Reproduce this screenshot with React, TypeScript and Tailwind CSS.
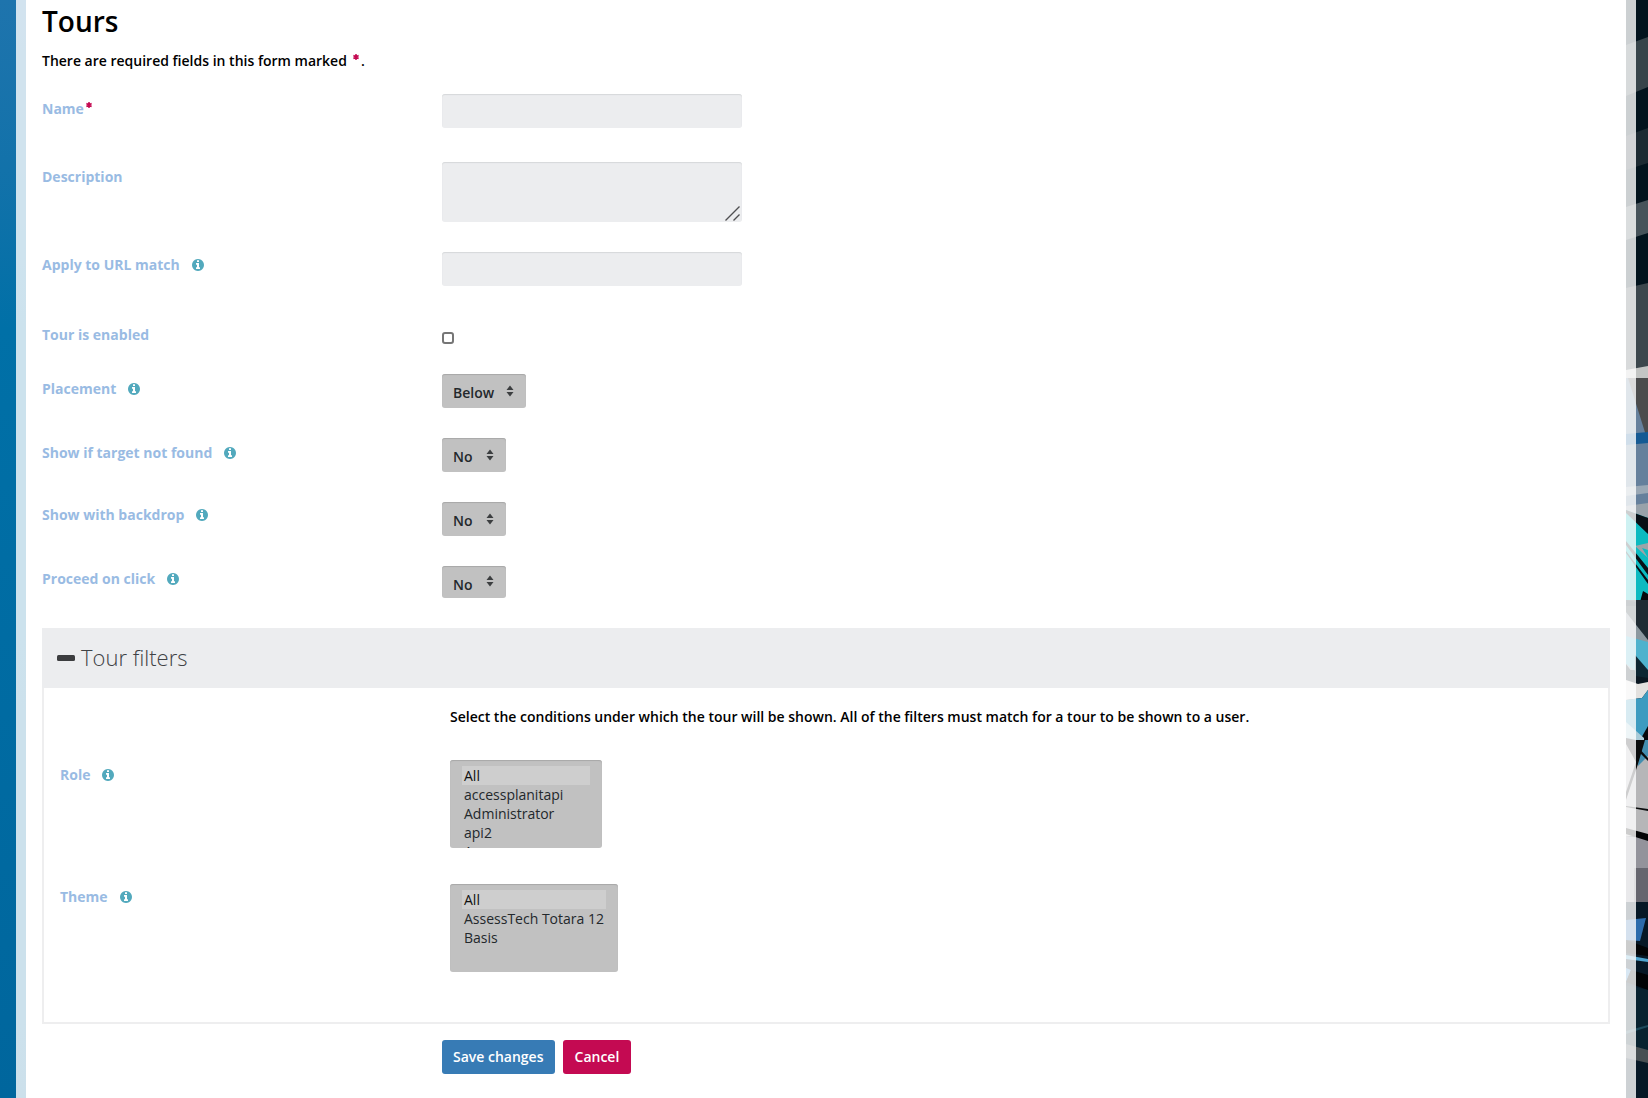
import React from "react";
import type { ReactNode } from "react";

function InfoIcon() {
  return (
    <button type="button" aria-label="Help" className="flex text-[#52a9bd]">
      <svg viewBox="0 128 1536 1536" className="size-3" fill="currentColor" aria-hidden="true">
        <path d="M1024 1376v-160q0-14-9-23t-23-9h-96v-512q0-14-9-23t-23-9h-320q-14 0-23 9t-9 23v160q0 14 9 23t23 9h96v320h-96q-14 0-23 9t-9 23v160q0 14 9 23t23 9h448q14 0 23-9t9-23zm-128-896v-160q0-14-9-23t-23-9h-192q-14 0-23 9t-9 23v160q0 14 9 23t23 9h192q14 0 23-9t9-23zm640 416q0 209-103 385.5t-279.5 279.5-385.5 103-385.5-103-279.5-279.5-103-385.5 103-385.5 279.5-279.5 385.5-103 385.5 103 279.5 279.5 103 385.5z" />
      </svg>
    </button>
  );
}

function Required() {
  return (
    <svg viewBox="0 0 12 12" className="inline-block size-1.5 shrink-0" role="img" aria-label="required">
      <path d="M6 0v12M0.8 3l10.4 6M11.2 3L0.8 9" stroke="#c40a52" strokeWidth="3" fill="none" />
    </svg>
  );
}

type RowProps = {
  id: string;
  label: string;
  help?: boolean;
  required?: boolean;
  inset?: boolean;
  raised?: boolean;
  className: string;
  children: ReactNode;
};

function Row({ id, label, help, required, inset, raised, className, children }: RowProps) {
  return (
    <div className={`flex items-start ${className}`}>
      <div
        className={`flex shrink-0 items-center leading-5 ${inset ? "w-[390px]" : "w-[400px]"} ${raised ? "pt-[3px]" : "pt-[5px]"}`}
      >
        <label htmlFor={id} className="font-bold text-[#99bbe3]">
          {label}
        </label>
        {required && (
          <span className="mb-2 ml-0.5 flex">
            <Required />
          </span>
        )}
        {help && (
          <span className="ml-3 flex">
            <InfoIcon />
          </span>
        )}
      </div>
      {children}
    </div>
  );
}

const fieldClass =
  "block w-[300px] rounded-[3px] bg-[#ecedef] px-3 text-[#23282c] shadow-[inset_0_1px_1px_#d6d8da] outline-none";

function Drop({ id, value, options, short }: { id: string; value: string; options: string[]; short?: boolean }) {
  return (
    <div className="relative">
      <select
        id={id}
        defaultValue={value}
        className={`block appearance-none rounded-[3px] bg-[#c1c1c1] pl-[11px] font-semibold text-[#23282c] shadow-[inset_0_1px_1px_#a8a8a8] outline-none ${
          short ? "h-8 pt-[5px]" : "h-[34px] pt-[3px]"
        } ${value === "No" ? "w-16" : "w-[84px]"}`}
      >
        {options.map((o) => (
          <option key={o}>{o}</option>
        ))}
      </select>
      <svg
        viewBox="0 0 8 12"
        className={`pointer-events-none absolute right-3 h-3 w-2 ${short ? "top-[9px]" : "top-[11px]"}`}
        fill="#3c3e40"
        aria-hidden="true"
      >
        <path d="M0.5 5L4 0.5 7.5 5zM0.5 7L4 11.5 7.5 7z" />
      </svg>
    </div>
  );
}

function List({ id, options, className }: { id: string; options: string[]; className: string }) {
  return (
    <select
      id={id}
      multiple
      size={4}
      defaultValue={["All"]}
      className={`block h-[88px] rounded-[3px] bg-[#c1c1c1] px-3 py-1.5 text-[#23282c] shadow-[inset_0_1px_1px_#a8a8a8] outline-none [scrollbar-width:none] ${className}`}
    >
      {options.map((o) => (
        <option key={o} className="px-0.5 py-0">
          {o}
        </option>
      ))}
    </select>
  );
}

function Backdrop() {
  return (
    <svg
      viewBox="0 0 22 1098"
      preserveAspectRatio="none"
      className="absolute right-0 top-0 h-full w-[22px]"
      aria-hidden="true"
    >
      <rect width="22" height="1098" fill="#02131d" />
      <path d="M0 45L22 37V87L0 96z" fill="#37444a" />
      <path d="M0 136L22 128V163L0 170z" fill="#1c2a32" />
      <path d="M0 207L22 200V233L0 240z" fill="#46535a" />
      <path d="M0 288L22 283V370H0z" fill="#3c474d" />
      <path d="M0 370L22 366V378H0z" fill="#c3c5c4" />
      <path d="M0 378H22V512H0z" fill="#65809c" />
      <path d="M2 378H22V442z" fill="#4b4c4d" />
      <path d="M0 434L22 432V443L0 445z" fill="#155a94" />
      <path d="M0 487L22 485V493L0 496z" fill="#9aa8b5" />
      <path d="M0 506L22 503V518L0 512z" fill="#98a2aa" />
      <path d="M0 510V600H22V518z" fill="#0cbac0" />
      <path d="M0 510L22 518V534L0 513z" fill="#081016" />
      <path d="M0 541L22 568V575L0 545zM0 551L22 580V584L0 553z" fill="#081016" />
      <path d="M9 546L22 543V550L16 548 22 558z" fill="#9ca4a8" />
      <path d="M17 591L22 594V602H14z" fill="#05090c" />
      <path d="M0 600H22V640L0 612z" fill="#1f2b33" />
      <path d="M0 600L10 602V606H0z" fill="#03121c" />
      <path d="M0 612L22 640V670H0z" fill="#8c989f" />
      <path d="M0 636L22 642V680L0 664z" fill="#4fb2cd" />
      <path d="M9 655L22 670V684H9z" fill="#0d2632" />
      <path d="M0 664L9 676 22 678V686H0z" fill="#0b1822" />
      <path d="M0 680L12 684 22 682V690L16 698 0 700z" fill="#e3e1df" />
      <path d="M0 700L16 698 22 690V740H0z" fill="#3d9bc0" />
      <path d="M22 726V740H14z" fill="#05090c" />
      <path d="M0 722L18 738V742H0z" fill="#a9cbd8" />
      <path d="M0 740H22V836H0z" fill="#b6b6b8" />
      <path d="M14 740H22V756L12 766z" fill="#438eb0" />
      <path d="M10 740H19L12 764 0 800V792L10 762 0 744V738z" fill="#0a0c0d" />
      <path d="M9 744L22 758V761L9 748z" fill="#0a0c0d" />
      <path d="M0 806L22 809V811L0 807z" fill="#0a0c0d" />
      <path d="M0 836V902H22V838z" fill="#93939b" />
      <path d="M8 868H22V902H8z" fill="#66666f" />
      <path d="M0 828L22 834V841L0 834z" fill="#030405" />
      <path d="M0 902H22V1098H0z" fill="#061826" />
      <path d="M0 920L20 918 14 941 0 940z" fill="#2b6bab" />
      <path d="M0 940L22 948V956L0 953z" fill="#010406" />
      <path d="M0 955L22 959V962L0 959z" fill="#4ea3ce" />
      <path d="M0 968L5 970 0 982z" fill="#3d86c5" />
      <path d="M5 970L22 975V990L0 982z" fill="#010406" />
      <path d="M0 985L22 990V1055H0z" fill="#08222f" />
      <path d="M0 1031L22 1025V1027L0 1034z" fill="#1d4a5b" />
      <path d="M0 1044L22 1050V1063L0 1058z" fill="#474f53" />
    </svg>
  );
}

export default function App() {
  return (
    <div className="relative flex min-h-screen bg-linear-to-b from-[#1e74ad] via-[#0070a7] via-30% to-[#00669d] pl-4 pr-3 font-['Open_Sans',sans-serif] text-sm">
      <Backdrop />
      <main className="relative min-w-0 flex-1 border-x-[10px] border-white/80 bg-white bg-clip-padding px-4 pb-6">
        <h1 className="pt-[3px] text-[28px] font-semibold leading-9 text-black">Tours</h1>
        <p className="mt-3 flex items-center font-semibold leading-5 text-black">
          There are required fields in this form marked
          <span className="mb-2 ml-1.5 mr-0.5 flex">
            <Required />
          </span>
          .
        </p>
        <form onSubmit={(e) => e.preventDefault()}>
          <Row id="name" label="Name" required className="mt-[23px]">
            <input id="name" type="text" className={`${fieldClass} h-[34px]`} />
          </Row>
          <Row id="description" label="Description" className="mt-[34px]">
            <div className="relative">
              <textarea id="description" className={`${fieldClass} h-[60px] resize-none`} />
              <svg
                viewBox="0 0 15 15"
                className="pointer-events-none absolute bottom-px right-0.5 size-[15px]"
                stroke="#4f5052"
                fill="none"
                aria-hidden="true"
              >
                <path d="M0.5 14.5L14.5 0.5M8.5 14.5L14.5 8.5" strokeWidth="1.4" />
              </svg>
            </div>
          </Row>
          <Row id="url" label="Apply to URL match" help raised className="mt-[30px]">
            <input id="url" type="text" className={`${fieldClass} h-[34px]`} />
          </Row>
          <Row id="enabled" label="Tour is enabled" raised className="mt-9">
            <input
              id="enabled"
              type="checkbox"
              className="mt-2.5 size-3 appearance-none rounded-[3px] border-2 border-[#767676] bg-white checked:bg-[#377bb5]"
            />
          </Row>
          <Row id="placement" label="Placement" help className="mt-[29px]">
            <Drop id="placement" value="Below" options={["Above", "Below", "Left", "Right"]} />
          </Row>
          <Row id="orphan" label="Show if target not found" help className="mt-[30px]">
            <Drop id="orphan" value="No" options={["No", "Yes"]} />
          </Row>
          <Row id="backdrop" label="Show with backdrop" help raised className="mt-[30px]">
            <Drop id="backdrop" value="No" options={["No", "Yes"]} />
          </Row>
          <Row id="reflex" label="Proceed on click" help raised className="mt-[30px]">
            <Drop id="reflex" value="No" options={["No", "Yes"]} short />
          </Row>

          <section className="mt-[30px] border-2 border-[#eeeeef] pb-[50px]">
            <h2 className="-mx-0.5 -mt-0.5 bg-[#ecedef]">
              <button
                type="button"
                aria-expanded="true"
                className="flex h-[60px] w-full items-center gap-1.5 pl-[15px] text-left text-[22px] font-light text-[#3f4245]"
              >
                <svg viewBox="0 0 18 6" className="h-1.5 w-[18px]" aria-hidden="true">
                  <rect width="18" height="6" rx="1.5" fill="#3c3d3f" />
                </svg>
                Tour filters
              </button>
            </h2>
            <div className="px-4">
              <p className="ml-[390px] mt-[19px] font-semibold leading-5 text-black">
                Select the conditions under which the tour will be shown. All of the filters must match for a tour to be
                shown to a user.
              </p>
              <Row id="role" label="Role" help inset className="mt-[33px]">
                <List
                  id="role"
                  className="w-[152px]"
                  options={["All", "accessplanitapi", "Administrator", "api2", "Assessor"]}
                />
              </Row>
              <Row id="theme" label="Theme" help inset raised className="mt-9">
                <List id="theme" className="w-[168px]" options={["All", "AssessTech Totara 12", "Basis"]} />
              </Row>
            </div>
          </section>

          <div className="ml-[400px] mt-4 flex gap-2 font-semibold text-white">
            <button type="submit" className="h-[34px] rounded-[3px] bg-[#377bb5] px-[11px]">
              Save changes
            </button>
            <button type="button" className="h-[34px] rounded-[3px] bg-[#c40a52] px-3">
              Cancel
            </button>
          </div>
        </form>
      </main>
    </div>
  );
}
